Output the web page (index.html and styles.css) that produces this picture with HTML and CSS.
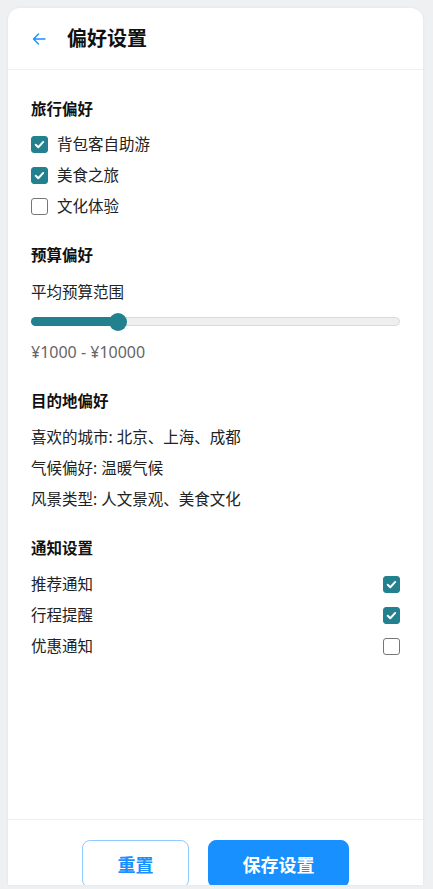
FILE: index.html
```html
<!DOCTYPE html>
<html lang="zh-CN">
<head>
<meta charset="utf-8">
<title>偏好设置</title>
<link rel="stylesheet" href="styles.css">
</head>
<body>
<div class="card">
  <header class="header">
    <button class="back" aria-label="返回">
      <svg width="14" height="14" viewBox="0 0 14 14" fill="none" stroke="#1890ff" stroke-width="1.4" stroke-linecap="round" stroke-linejoin="round"><path d="M13 7H1.5M6.5 2L1.5 7l5 5"/></svg>
    </button>
    <h1 class="title">偏好设置</h1>
  </header>

  <main class="content">
    <section class="section">
      <h2 class="section-title tight">旅行偏好</h2>
      <div class="rows">
        <label class="check-row"><span class="box checked"><svg viewBox="0 0 17 17"><path d="M4.2 8.8l2.9 2.8 5.6-6" fill="none" stroke="#fff" stroke-width="2.2" stroke-linecap="round" stroke-linejoin="round"/></svg></span>背包客自助游</label>
        <label class="check-row"><span class="box checked"><svg viewBox="0 0 17 17"><path d="M4.2 8.8l2.9 2.8 5.6-6" fill="none" stroke="#fff" stroke-width="2.2" stroke-linecap="round" stroke-linejoin="round"/></svg></span>美食之旅</label>
        <label class="check-row"><span class="box"></span>文化体验</label>
      </div>
    </section>

    <section class="section">
      <h2 class="section-title budget-title">预算偏好</h2>
      <div class="budget-label">平均预算范围</div>
      <div class="slider">
        <div class="slider-fill" style="width: 87px"></div>
        <div class="slider-thumb" style="left: 77px"></div>
      </div>
      <div class="budget-value">¥1000 - ¥10000</div>
    </section>

    <section class="section">
      <h2 class="section-title">目的地偏好</h2>
      <div class="rows">
        <div class="text-row">喜欢的城市: 北京、上海、成都</div>
        <div class="text-row">气候偏好: 温暖气候</div>
        <div class="text-row">风景类型: 人文景观、美食文化</div>
      </div>
    </section>

    <section class="section">
      <h2 class="section-title">通知设置</h2>
      <div class="rows">
        <label class="switch-row">推荐通知<span class="box checked"><svg viewBox="0 0 17 17"><path d="M4.2 8.8l2.9 2.8 5.6-6" fill="none" stroke="#fff" stroke-width="2.2" stroke-linecap="round" stroke-linejoin="round"/></svg></span></label>
        <label class="switch-row">行程提醒<span class="box checked"><svg viewBox="0 0 17 17"><path d="M4.2 8.8l2.9 2.8 5.6-6" fill="none" stroke="#fff" stroke-width="2.2" stroke-linecap="round" stroke-linejoin="round"/></svg></span></label>
        <label class="switch-row">优惠通知<span class="box"></span></label>
      </div>
    </section>
  </main>

  <footer class="footer">
    <button class="btn btn-ghost">重置</button>
    <button class="btn btn-primary">保存设置</button>
  </footer>
</div>
</body>
</html>
```

FILE: styles.css
```css
* { box-sizing: border-box; }
html, body { height: 100%; }
body {
  margin: 0;
  padding: 8px 10px 0 8px;
  background: #eef0f2;
  font-family: "Noto Sans", "Noto Sans CJK SC", sans-serif;
  color: #222;
  overflow: hidden;
}
.card {
  width: 415px;
  height: 877px;
  background: #fff;
  border-radius: 12px 12px 0 0;
  box-shadow: 0 0 3px rgba(0,0,0,0.06);
  display: flex;
  flex-direction: column;
  overflow: hidden;
}
.header {
  height: 62px;
  flex: none;
  display: flex;
  align-items: center;
  padding: 0 0 0 24px;
  border-bottom: 1px solid #eeeff1;
}
.back {
  border: 0;
  background: none;
  padding: 0;
  width: 14px;
  height: 14px;
  display: flex;
  cursor: pointer;
}
.title {
  margin: 0 0 0 21px;
  font-size: 20px;
  font-weight: 700;
  color: #111;
  line-height: 28px;
}
.content {
  flex: 1;
  padding: 28px 23px 0 23px;
}
.section { margin-bottom: 27px; }
.section-title {
  margin: 0 0 14px;
  font-size: 15.5px;
  font-weight: 700;
  line-height: 22px;
  color: #111;
}
.section-title.tight { margin-bottom: 13px; }
.section-title.budget-title { margin-bottom: 0; }
.rows {
  display: flex;
  flex-direction: column;
  gap: 9px;
}
.check-row, .text-row, .switch-row {
  height: 22px;
  display: flex;
  align-items: center;
  font-size: 15.5px;
  line-height: 22px;
  color: #222;
}
.check-row .box { margin-right: 9px; }
.switch-row { justify-content: space-between; }
.box {
  width: 17px;
  height: 17px;
  border-radius: 3px;
  border: 1px solid #767676;
  background: #fff;
  display: inline-flex;
  flex: none;
}
.box.checked {
  background: #23808e;
  border-color: #23808e;
}
.box svg { width: 100%; height: 100%; }
.budget-label {
  margin-top: 15px;
  font-size: 15.5px;
  line-height: 22px;
  color: #222;
}
.slider {
  position: relative;
  margin-top: 14px;
  height: 9px;
  border-radius: 5px;
  background: #efefef;
  border: 1px solid #d9d9d9;
}
.slider-fill {
  position: absolute;
  left: -1px;
  top: -1px;
  bottom: -1px;
  border-radius: 5px;
  background: #23808e;
}
.slider-thumb {
  position: absolute;
  top: 50%;
  width: 18px;
  height: 18px;
  margin-top: -9px;
  border-radius: 50%;
  background: #23808e;
}
.budget-value {
  margin-top: 15px;
  font-size: 16px;
  line-height: 22px;
  color: #666;
}
.footer {
  flex: none;
  height: 66px;
  border-top: 1px solid #eeeff1;
  padding-top: 20px;
  display: flex;
  justify-content: center;
  gap: 19px;
}
.btn {
  height: 48px;
  border-radius: 8px;
  font-family: inherit;
  font-size: 18px;
  font-weight: 700;
  cursor: pointer;
}
.btn-ghost {
  width: 107px;
  background: #fff;
  border: 1px solid #91caff;
  color: #1890ff;
}
.btn-primary {
  width: 141px;
  background: #1890ff;
  border: 1px solid #1890ff;
  color: #fff;
}
```
